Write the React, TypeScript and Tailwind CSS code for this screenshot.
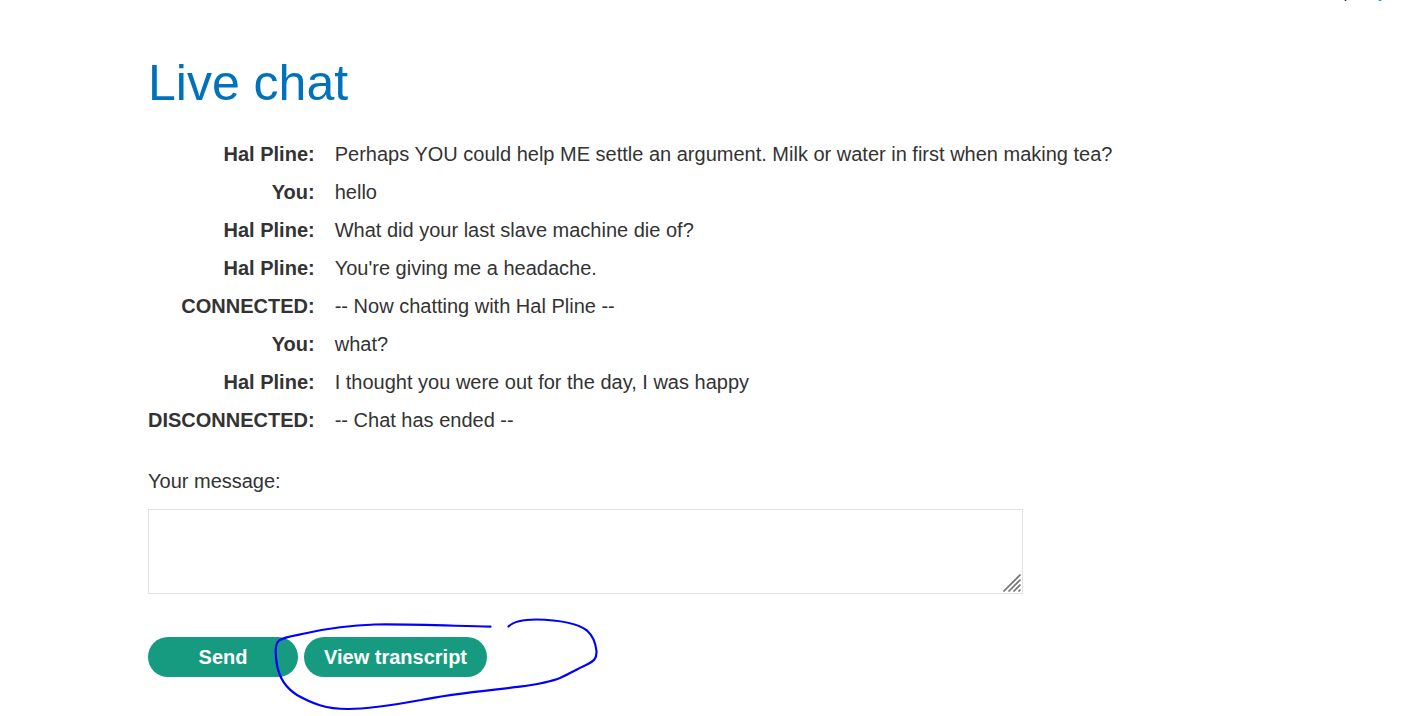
type Message = { from: string; text: string };

const messages: Message[] = [
  { from: "Hal Pline", text: "Perhaps YOU could help ME settle an argument. Milk or water in first when making tea?" },
  { from: "You", text: "hello" },
  { from: "Hal Pline", text: "What did your last slave machine die of?" },
  { from: "Hal Pline", text: "You're giving me a headache." },
  { from: "CONNECTED", text: "-- Now chatting with Hal Pline --" },
  { from: "You", text: "what?" },
  { from: "Hal Pline", text: "I thought you were out for the day, I was happy" },
  { from: "DISCONNECTED", text: "-- Chat has ended --" },
];

function HeaderEdge() {
  return (
    <svg aria-hidden="true" className="absolute top-0 right-11 h-px w-[38px]" viewBox="0 0 38 1" shapeRendering="crispEdges">
      <rect x="0" width="1" height="1" fill="#f5b878" />
      <rect x="1" width="1" height="1" fill="#333355" />
      <rect x="2" width="1" height="1" fill="#8fcdf5" />
      <rect x="34" width="1" height="1" fill="#b5d5ee" />
      <rect x="35" width="2" height="1" fill="#2ba3e0" />
      <rect x="37" width="1" height="1" fill="#8edcf5" />
    </svg>
  );
}

function ResizeGrip() {
  return (
    <svg
      aria-hidden="true"
      className="pointer-events-none absolute right-0.5 bottom-0.5 h-[18px] w-[18px]"
      viewBox="0 0 18 18"
      stroke="#757575"
      strokeWidth="1.6"
    >
      <path d="M.5 17.5l17-17M5.5 17.5l12-12M10.500 17.500l7-7M15.500 17.500l2-2" />
    </svg>
  );
}

function InkLoop() {
  return (
    <svg
      aria-hidden="true"
      className="pointer-events-none absolute -top-[25px] left-[122px] h-[104px] w-[332px]"
      viewBox="270 612 332 104"
      fill="none"
      stroke="#0000ff"
      strokeWidth="2.2"
      strokeLinecap="round"
      strokeLinejoin="round"
    >
      <path d="M490.500 626.700C455 626 415 624 375 624.500C345 625.500 327 628.500 307 633C296 635.500 285 636.500 279 640.500C274.500 644 275.500 656 277 665C279.500 679 286 688 297 695C312 703.500 326 709 348 709C371 709 399 704 421 700C452 693.500 488 690.500 520 686.700C536 684.500 550 682 560 678C569 674 577 669 586 665C594 661 596.800 659 596.500 651C595.500 642 592 635 587 630.500C577 623 561 620 536 619.500C521 619.500 513 622 508.500 626.500" />
    </svg>
  );
}

export default function App() {
  return (
    <main className="relative px-6 pt-[53px] pb-9 font-['Liberation_Sans',Arial,sans-serif] text-xl text-[#333333]">
      <HeaderEdge />
      <div className="mx-auto max-w-[1130px]">
        <h1 className="text-[50px] leading-[60px] text-[#0072bc]">Live chat</h1>

        <table className="mt-[22px]">
          <tbody>
            {messages.map((message, index) => (
              <tr key={index}>
                <th scope="row" className="py-[5px] pr-5 text-right align-top font-bold whitespace-nowrap">
                  {message.from}:
                </th>
                <td className="py-[5px] text-left align-top">{message.text}</td>
              </tr>
            ))}
          </tbody>
        </table>

        <form className="mt-7" onSubmit={(event) => event.preventDefault()}>
          <label htmlFor="message" className="block">
            Your message:
          </label>
          <div className="relative mt-[14px] max-w-[875px]">
            <textarea
              id="message"
              className="block h-[85px] w-full resize-none border border-[#e2e2e2] bg-white px-2 py-1 outline-none focus:border-[#0072bc]"
            />
            <ResizeGrip />
          </div>
          <div className="relative mt-[43px] flex gap-1.5">
            <button type="submit" className="h-10 w-[150px] rounded-full bg-[#169b80] font-bold text-white">
              Send
            </button>
            <button type="button" className="h-10 rounded-full bg-[#169b80] px-5 font-bold text-white">
              View transcript
            </button>
            <InkLoop />
          </div>
        </form>
      </div>
    </main>
  );
}
